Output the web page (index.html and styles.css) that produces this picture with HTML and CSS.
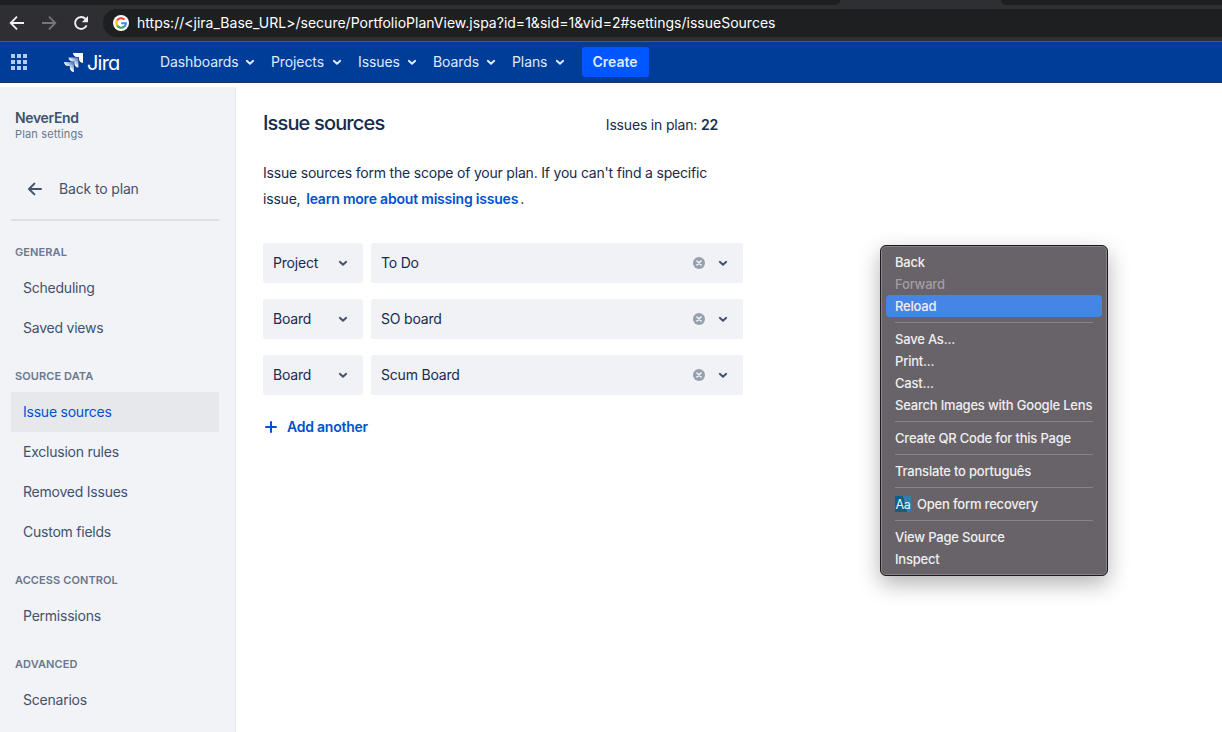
FILE: index.html
```html
<!DOCTYPE html>
<html lang="en">
<head>
    <meta charset="UTF-8">
    <meta name="viewport" content="width=device-width, initial-scale=1.0">
    <title>Issue sources - Jira</title>
    <link rel="stylesheet" href="styles.css">
</head>
<body>
<svg width="0" height="0" class="defs">
    <symbol id="chevron" viewBox="0 0 10 8">
        <path d="M1.8 2.8 L5 5.8 L8.2 2.8" fill="none" stroke="currentColor" stroke-width="1.9" stroke-linecap="round" stroke-linejoin="round"/>
    </symbol>
    <symbol id="clear" viewBox="0 0 12 12">
        <circle cx="6" cy="6" r="6" fill="#97a0af"/>
        <path d="M4 4 L8 8 M8 4 L4 8" stroke="#f4f5f7" stroke-width="1.6" stroke-linecap="round"/>
    </symbol>
</svg>

<div class="browser">
    <div class="tabs">
        <div class="tab-left"></div>
        <div class="tab-right"></div>
    </div>
    <div class="toolbar">
        <svg class="tool-icon" width="16" height="16" viewBox="0 0 16 16"><path d="M15 8 H2 M8 1.7 L1.7 8 L8 14.3" fill="none" stroke="#f1f1f2" stroke-width="1.8"/></svg>
        <svg class="tool-icon" width="16" height="16" viewBox="0 0 16 16"><path d="M1 8 H14 M8 1.7 L14.3 8 L8 14.3" fill="none" stroke="#77767a" stroke-width="1.8"/></svg>
        <svg class="tool-icon" width="16" height="16" viewBox="0 0 16 16"><path d="M13.6 10.4 A6 6 0 1 1 12.6 4" fill="none" stroke="#f1f1f2" stroke-width="1.9"/><path d="M15 1 V7.2 H8.8 Z" fill="#f1f1f2"/></svg>
        <div class="address">
            <svg width="16" height="16" viewBox="0 0 16 16">
                <circle cx="8" cy="8" r="8" fill="#fff"/>
                <g fill="none" stroke-width="2.1">
                    <path d="M4.1 5.4 A4.9 4.9 0 0 1 11.5 4.5" stroke="#ea4335"/>
                    <path d="M4.2 10.7 A4.9 4.9 0 0 1 4.1 5.4" stroke="#fbbc05"/>
                    <path d="M11.2 11.7 A4.9 4.9 0 0 1 4.2 10.7" stroke="#34a853"/>
                    <path d="M8.2 8.2 H12.9 A4.9 4.9 0 0 1 11.2 11.7" stroke="#4285f4"/>
                </g>
            </svg>
            <span>https://&lt;jira_Base_URL&gt;/secure/PortfolioPlanView.jspa?id=1&amp;sid=1&amp;vid=2#settings/issueSources</span>
        </div>
    </div>
</div>

<header class="nav">
    <svg class="switcher" width="16" height="16" viewBox="0 0 16 16" fill="#b3cbf2">
        <path d="M0 0h4v4H0z M6 0h4v4H6z M12 0h4v4h-4z M0 6h4v4H0z M6 6h4v4H6z M12 6h4v4h-4z M0 12h4v4H0z M6 12h4v4H6z M12 12h4v4h-4z"/>
    </svg>
    <div class="logo">
        <svg width="19" height="19" viewBox="0 0 19 19">
            <defs>
                <linearGradient id="fade" x1="1" y1="0" x2="0.3" y2="0.8">
                    <stop offset="0.15" stop-color="#fff" stop-opacity="0.35"/>
                    <stop offset="0.75" stop-color="#fff"/>
                </linearGradient>
            </defs>
            <path d="M9 0 H19 V10 C16.8 10 15 8.3 15 6.1 V4 H13 C10.8 4 9 2.2 9 0 Z" fill="#fff"/>
            <path d="M4.5 4.6 H14.4 V14.5 C12.2 14.5 10.4 12.7 10.4 10.5 V8.6 H8.5 C6.3 8.6 4.5 6.8 4.5 4.6 Z" fill="url(#fade)"/>
            <path d="M0 9.1 H9.9 V19 C7.7 19 5.9 17.2 5.9 15 V13.1 H4 C1.8 13.1 0 11.3 0 9.1 Z" fill="url(#fade)"/>
        </svg>
        <span>Jira</span>
    </div>
    <nav class="menu">
        <a class="w1">Dashboards <svg width="10" height="8"><use href="#chevron"/></svg></a>
        <a class="w2">Projects <svg width="10" height="8"><use href="#chevron"/></svg></a>
        <a class="w3">Issues <svg width="10" height="8"><use href="#chevron"/></svg></a>
        <a class="w4">Boards <svg width="10" height="8"><use href="#chevron"/></svg></a>
        <a class="w5">Plans <svg width="10" height="8"><use href="#chevron"/></svg></a>
    </nav>
    <button class="create">Create</button>
</header>

<div class="page">
    <aside class="sidebar">
        <div class="plan-name">NeverEnd</div>
        <div class="plan-sub">Plan settings</div>
        <a class="back">
            <svg width="16" height="16" viewBox="0 0 16 16"><path d="M14 8 H2.4 M7.4 2.6 L2 8 L7.4 13.4" fill="none" stroke="#42526e" stroke-width="2" stroke-linecap="round" stroke-linejoin="round"/></svg>
            <span>Back to plan</span>
        </a>
        <h3>General</h3>
        <a class="item">Scheduling</a>
        <a class="item">Saved views</a>
        <h3>Source data</h3>
        <a class="item selected">Issue sources</a>
        <a class="item">Exclusion rules</a>
        <a class="item">Removed Issues</a>
        <a class="item">Custom fields</a>
        <h3>Access control</h3>
        <a class="item">Permissions</a>
        <h3>Advanced</h3>
        <a class="item">Scenarios</a>
    </aside>

    <main class="content">
        <div class="title-row">
            <h1>Issue sources</h1>
            <div class="count">Issues in plan: <b>22</b></div>
        </div>
        <p class="intro">Issue sources form the scope of your plan. If you can't find a specific<br>issue, <a>learn more about missing issues</a>.</p>
        <div class="source">
            <div class="select type">Project <svg width="10" height="8"><use href="#chevron"/></svg></div>
            <div class="select value"><span>To Do</span> <svg width="12" height="12"><use href="#clear"/></svg> <svg width="10" height="8"><use href="#chevron"/></svg></div>
        </div>
        <div class="source">
            <div class="select type">Board <svg width="10" height="8"><use href="#chevron"/></svg></div>
            <div class="select value"><span>SO board</span> <svg width="12" height="12"><use href="#clear"/></svg> <svg width="10" height="8"><use href="#chevron"/></svg></div>
        </div>
        <div class="source">
            <div class="select type">Board <svg width="10" height="8"><use href="#chevron"/></svg></div>
            <div class="select value"><span>Scum Board</span> <svg width="12" height="12"><use href="#clear"/></svg> <svg width="10" height="8"><use href="#chevron"/></svg></div>
        </div>
        <a class="add">
            <svg width="12" height="12" viewBox="0 0 12 12"><path d="M6 1 V11 M1 6 H11" stroke="#0052cc" stroke-width="2" stroke-linecap="round"/></svg>
            <span>Add another</span>
        </a>
    </main>
</div>

<div class="context-menu">
    <div class="entry">Back</div>
    <div class="entry disabled">Forward</div>
    <div class="entry active">Reload</div>
    <hr>
    <div class="entry">Save As...</div>
    <div class="entry">Print...</div>
    <div class="entry">Cast...</div>
    <div class="entry">Search Images with Google Lens</div>
    <hr>
    <div class="entry">Create QR Code for this Page</div>
    <hr>
    <div class="entry">Translate to português</div>
    <hr>
    <div class="entry"><span class="aa">Aa</span>Open form recovery</div>
    <hr>
    <div class="entry">View Page Source</div>
    <div class="entry">Inspect</div>
</div>
</body>
</html>
```
FILE: styles.css
```css
* {
    box-sizing: border-box;
}

body {
    margin: 0;
    height: 732px;
    overflow: hidden;
    background: #fff;
    color: #172b4d;
    font-family: Inter, "Liberation Sans", sans-serif;
    font-size: 14px;
    line-height: 16px;
    display: flex;
    flex-direction: column;
}

svg {
    flex: none;
    display: block;
}

.defs {
    position: absolute;
}

/* browser chrome */
.browser {
    height: 42px;
    background: #2f2e33;
    border-bottom: 1px solid #58585a;
}

.tabs {
    display: flex;
    justify-content: space-between;
    height: 5px;
}

.tab-left,
.tab-right {
    background: #1e1f21;
}

.tab-left {
    width: 840px;
    border-bottom-right-radius: 6px;
}

.tab-right {
    width: 221px;
    border-bottom-left-radius: 6px;
}

.toolbar {
    display: flex;
    align-items: center;
    height: 36px;
    padding-left: 9px;
}

.tool-icon {
    margin-right: 16px;
}

.address {
    flex: 1;
    display: flex;
    align-items: center;
    height: 28px;
    margin-left: -2px;
    padding-left: 10px;
    gap: 8px;
    background: #1e1f21;
    border-radius: 14px 0 0 14px;
    color: #fff;
    letter-spacing: 0.01px;
    white-space: nowrap;
}

/* Jira header */
.nav {
    display: flex;
    align-items: center;
    height: 41px;
    padding-left: 11px;
    background: #003d99;
    border-bottom: 1px solid #253858;
    color: #deebff;
}

.logo {
    display: flex;
    align-items: center;
    width: 96px;
    margin-left: 37px;
    gap: 4px;
    color: #fff;
    font-size: 20px;
    letter-spacing: -0.8px;
    line-height: 24px;
    font-feature-settings: "cv11";
}

.logo span {
    padding-top: 1px;
}

.menu {
    display: flex;
}

.menu a {
    display: flex;
    align-items: center;
    justify-content: space-between;
    letter-spacing: -0.1px;
}

.menu .w1 { width: 95px; margin-right: 16px; }
.menu .w2 { width: 71px; margin-right: 16px; }
.menu .w3 { width: 59px; margin-right: 16px; }
.menu .w4 { width: 63px; margin-right: 16px; }
.menu .w5 { width: 53px; margin-right: 17px; }

.create {
    width: 67px;
    height: 30px;
    padding: 0 1px 0 0;
    border: none;
    border-radius: 3px;
    background: #0057ff;
    color: #deebff;
    font: 600 14px/16px Inter, "Liberation Sans", sans-serif;
}

.page {
    flex: 1;
    display: flex;
}

/* settings sidebar */
.sidebar {
    width: 236px;
    margin-top: 4px;
    padding: 21px 16px 0 11px;
    background: #f1f3f7;
    border-right: 1px solid #e3e6eb;
    border-top-right-radius: 2px;
    color: #42526e;
}

.plan-name {
    padding-left: 4px;
    font-weight: 600;
    letter-spacing: -0.35px;
    line-height: 20px;
}

.plan-sub {
    padding-left: 4px;
    color: #6b778c;
    font-size: 11px;
    letter-spacing: 0.15px;
    line-height: 12px;
}

.back {
    display: flex;
    align-items: center;
    height: 81px;
    padding: 18px 0 0 16px;
    gap: 16px;
    border-bottom: 2px solid #dcdfe4;
    letter-spacing: -0.15px;
}

.sidebar h3 {
    margin: 0;
    padding: 20px 0 0 4px;
    height: 44px;
    color: #6b778c;
    font-size: 11px;
    font-weight: 600;
    letter-spacing: 0.1px;
    line-height: 16px;
    text-transform: uppercase;
}

.back + h3 {
    height: 47px;
    padding-top: 23px;
}

.item {
    display: block;
    height: 40px;
    padding-left: 12px;
    letter-spacing: -0.23px;
    line-height: 40px;
}

.selected {
    background: #e7e8ec;
    color: #0052cc;
}

/* issue sources */
.content {
    width: 507px;
    padding: 28px 0 0 27px;
}

.title-row {
    display: flex;
    justify-content: space-between;
    width: 455px;
}

h1 {
    margin: 0;
    font-size: 20px;
    font-weight: 500;
    letter-spacing: -0.85px;
    line-height: 24px;
}

.count {
    letter-spacing: -0.18px;
    line-height: 28px;
}

.count b {
    font-weight: 600;
}

.intro {
    margin: 21px 0 32px;
    letter-spacing: -0.2px;
    line-height: 25.5px;
    white-space: nowrap;
}

.intro a {
    margin: 0 2px;
    color: #0052cc;
    font-weight: 600;
}

.source {
    display: flex;
    gap: 8px;
    margin-bottom: 16px;
}

.select {
    display: flex;
    align-items: center;
    height: 40px;
    padding: 0 15px 0 10px;
    border-radius: 3px;
    background: #f1f2f6;
    letter-spacing: -0.2px;
}

.select svg {
    color: #42526e;
}

.type {
    width: 100px;
    justify-content: space-between;
}

.value {
    flex: 1;
    gap: 13px;
}

.value span {
    flex: 1;
}

.add {
    display: flex;
    align-items: center;
    height: 32px;
    padding-left: 2px;
    gap: 10px;
    color: #0052cc;
    font-weight: 600;
    letter-spacing: -0.23px;
}

/* right click menu */
.context-menu {
    position: absolute;
    left: 880px;
    top: 245px;
    width: 228px;
    height: 331px;
    padding: 5px;
    border: 1px solid #1c1b1e;
    border-radius: 6px;
    background: #686368;
    box-shadow: inset 0 0 0 1px #878388, 0 8px 22px rgba(0, 0, 0, 0.3);
    color: #f0eff0;
    font-size: 13px;
    font-weight: 500;
    letter-spacing: -0.2px;
}

.entry {
    display: flex;
    align-items: center;
    height: 22px;
    padding-left: 9px;
    border-radius: 4px;
    white-space: nowrap;
}

.disabled {
    color: #a19ea1;
}

.active {
    background: #4585e6;
}

.context-menu hr {
    height: 1px;
    margin: 5px 9px;
    border: none;
    background: #878388;
}

.aa {
    width: 16px;
    height: 16px;
    margin-right: 6px;
    background: linear-gradient(75deg, #125c85 60%, #3280aa 60%);
    font-size: 12.5px;
    font-weight: 400;
    line-height: 17px;
    text-align: center;
}
```
